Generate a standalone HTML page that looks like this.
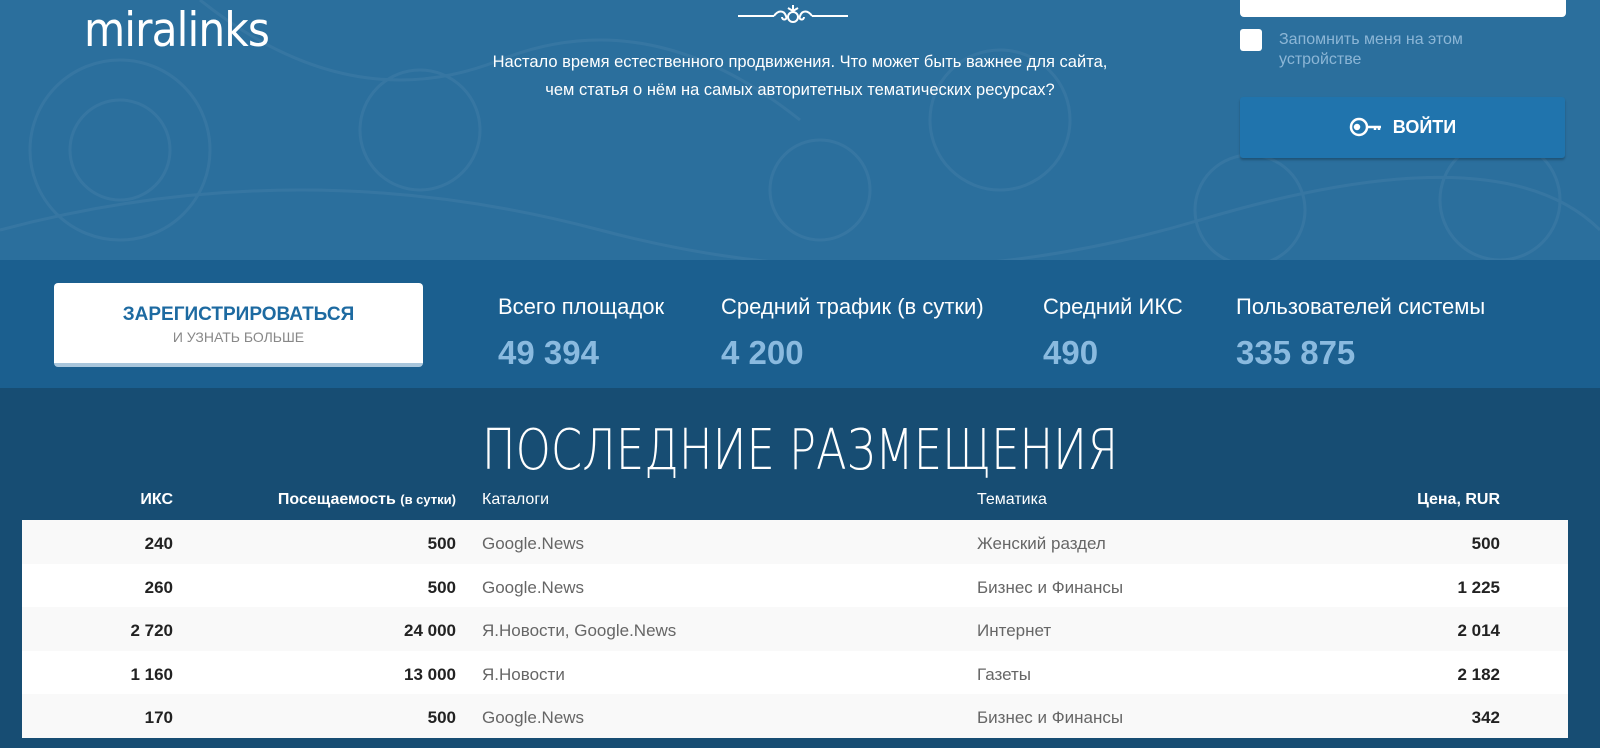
<!DOCTYPE html>
<html><head><meta charset="utf-8"><style>
*{margin:0;padding:0;box-sizing:border-box}
body{width:1600px;height:748px;overflow:hidden;font-family:"Liberation Sans",sans-serif;background:#174d73;position:relative}
.top{position:absolute;left:0;top:0;width:1600px;height:260px;background:#2b6f9d}
.logo{position:absolute;left:84px;top:3px;color:#fff;font-size:47px;font-family:"DejaVu Sans",sans-serif;letter-spacing:-1px;transform:scaleX(.9);transform-origin:left}
.tag{position:absolute;left:420px;width:760px;top:48px;text-align:center;color:#fff;font-size:16.5px;line-height:28px}
.inp{position:absolute;left:1240px;top:-10px;width:326px;height:27px;background:#fff;border-radius:4px}
.cb{position:absolute;left:1240px;top:29px;width:22px;height:22px;background:#fff;border-radius:3px}
.rem{position:absolute;left:1279px;top:30px;color:#8cb6d6;font-size:16px;line-height:20px}
.btn{position:absolute;left:1240px;top:97px;width:325px;height:61px;background:#2074ad;border-radius:3px;box-shadow:0 2px 2px rgba(0,0,0,.25);color:#fff;font-weight:bold;font-size:18px;text-align:center;line-height:61px}
.stats{position:absolute;left:0;top:260px;width:1600px;height:128px;background:#1b5f8f}
.reg{position:absolute;left:54px;top:23px;width:369px;height:84px;background:#fff;border-radius:4px;border-bottom:4px solid #a9c6dc;text-align:center}
.reg b{display:block;color:#1d6aa1;font-size:19px;margin-top:21px}
.reg span{display:block;color:#888;font-size:14px;margin-top:3px}
.st{position:absolute;top:34px;color:#fff;font-size:22px;white-space:nowrap}
.st b{display:block;color:#8abadf;font-size:33px;margin-top:14px}
h1{position:absolute;left:0;width:1600px;top:418px;text-align:center;color:#fff;font-weight:normal;font-size:56px;font-family:"DejaVu Sans ExtraLight","DejaVu Sans","Liberation Sans",sans-serif;font-weight:200;transform:scaleX(.8)}
.th{position:absolute;top:491px;color:#fff;font-size:16px}
.tbl{position:absolute;left:22px;top:520px;width:1546px}
.row{height:43.6px;position:relative;font-size:17px}
.row:nth-child(odd){background:#f9f9f9}.row:nth-child(even){background:#fff}
.row div{position:absolute;top:14px}
.r{text-align:right;font-weight:bold;color:#222}
.l{color:#666}
</style></head><body>
<div class="top">
<svg width="1600" height="260" style="position:absolute;left:0;top:0;opacity:.05" fill="none" stroke="#fff" stroke-width="3">
<circle cx="120" cy="150" r="90"/><circle cx="120" cy="150" r="50"/><circle cx="420" cy="130" r="60"/><circle cx="820" cy="190" r="50"/><circle cx="1000" cy="120" r="70"/><circle cx="1250" cy="210" r="55"/><circle cx="1500" cy="200" r="60"/><path d="M0 230 Q300 150 600 230 T1200 220 T1600 230"/><path d="M200 0 Q350 120 500 60 T800 120"/>
</svg>
<div class="logo">miralinks</div>
<svg style="position:absolute;left:736px;top:5px" width="114" height="22" fill="none" stroke="#fff" stroke-width="2"><path d="M2 11H38M76 11H112"/><path d="M38 11c4-6 10-6 12 0 2 4-4 5-4 1M76 11c-4-6-10-6-12 0-2 4 4 5 4 1"/><circle cx="57" cy="12" r="5"/><path d="M57 0v6M52 3l5 3 5-3"/></svg>
<div class="tag">Настало время естественного продвижения. Что может быть важнее для сайта,<br>чем статья о нём на самых авторитетных тематических ресурсах?</div>
<div class="inp"></div>
<div class="cb"></div>
<div class="rem">Запомнить меня на этом<br>устройстве</div>
<div class="btn"><svg width="34" height="20" style="vertical-align:-4px;margin-right:10px" fill="none" stroke="#fff" stroke-width="2.5"><circle cx="10" cy="10" r="8"/><circle cx="8" cy="10" r="2" fill="#fff"/><path d="M18 10h14M26 10v3M30 10v3"/></svg>ВОЙТИ</div>
</div>
<div class="stats">
<div class="reg"><b>ЗАРЕГИСТРИРОВАТЬСЯ</b><span>И УЗНАТЬ БОЛЬШЕ</span></div>
<div class="st" style="left:498px">Всего площадок<b>49 394</b></div>
<div class="st" style="left:721px">Средний трафик (в сутки)<b>4 200</b></div>
<div class="st" style="left:1043px">Средний ИКС<b>490</b></div>
<div class="st" style="left:1236px">Пользователей системы<b>335 875</b></div>
</div>
<h1>ПОСЛЕДНИЕ РАЗМЕЩЕНИЯ</h1>
<div class="th" style="right:1427px;font-weight:bold">ИКС</div>
<div class="th" style="right:1144px;font-weight:bold">Посещаемость <span style="font-size:13px">(в сутки)</span></div>
<div class="th" style="left:482px">Каталоги</div>
<div class="th" style="left:977px">Тематика</div>
<div class="th" style="right:100px;font-weight:bold">Цена, RUR</div>
<div class="tbl">
<div class="row"><div class="r" style="right:1395px">240</div><div class="r" style="right:1112px">500</div><div class="l" style="left:460px">Google.News</div><div class="l" style="left:955px">Женский раздел</div><div class="r" style="right:68px">500</div></div>
<div class="row"><div class="r" style="right:1395px">260</div><div class="r" style="right:1112px">500</div><div class="l" style="left:460px">Google.News</div><div class="l" style="left:955px">Бизнес и Финансы</div><div class="r" style="right:68px">1 225</div></div>
<div class="row"><div class="r" style="right:1395px">2 720</div><div class="r" style="right:1112px">24 000</div><div class="l" style="left:460px">Я.Новости, Google.News</div><div class="l" style="left:955px">Интернет</div><div class="r" style="right:68px">2 014</div></div>
<div class="row"><div class="r" style="right:1395px">1 160</div><div class="r" style="right:1112px">13 000</div><div class="l" style="left:460px">Я.Новости</div><div class="l" style="left:955px">Газеты</div><div class="r" style="right:68px">2 182</div></div>
<div class="row"><div class="r" style="right:1395px">170</div><div class="r" style="right:1112px">500</div><div class="l" style="left:460px">Google.News</div><div class="l" style="left:955px">Бизнес и Финансы</div><div class="r" style="right:68px">342</div></div>
</div>
</body></html>
